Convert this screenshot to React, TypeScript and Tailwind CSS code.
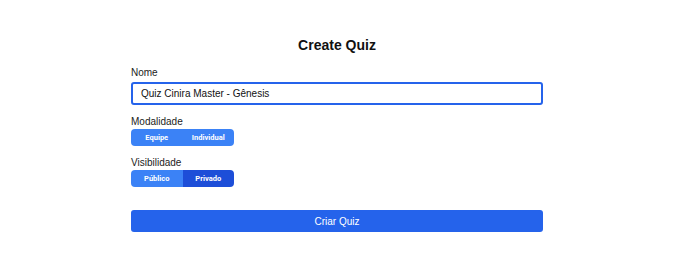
import React from "react";

const SANS = '"Liberation Sans", Arial, sans-serif';

export default function App() {
  return (
    <div className="min-h-screen bg-white flex justify-center pr-[3px]" style={{ fontFamily: SANS }}>
      <div className="w-[412px] pt-[37px] flex flex-col">
        <h1 className="text-center text-[14px] font-bold text-[#111] leading-[16px]">Create Quiz</h1>
        <div className="mt-[14px] flex flex-col">
          <label className="text-[10px] leading-[12px] text-[#222]">Nome</label>
          <input
            className="mt-[3px] h-[23px] w-full rounded-[3px] border-2 border-[#2563eb] px-[8px] text-[10px] text-[#111] outline-none"
            defaultValue="Quiz Cinira Master - Gênesis"
            style={{ fontFamily: SANS }}
          />
        </div>
        <div className="mt-[11px] flex flex-col">
          <label className="text-[10px] leading-[12px] text-[#222]">Modalidade</label>
          <div className="mt-[1px] flex w-[103px] h-[17px] rounded-[4px] overflow-hidden" style={{ fontFamily: 'Roboto, sans-serif' }}>
            <button className="flex-1 bg-[#3b82f6] text-white text-[7.5px] font-bold">Equipe</button>
            <button className="flex-1 bg-[#3b82f6] text-white text-[7.5px] font-bold">Individual</button>
          </div>
        </div>
        <div className="mt-[11px] flex flex-col">
          <label className="text-[10px] leading-[12px] text-[#222]">Visibilidade</label>
          <div className="mt-[1px] flex w-[103px] h-[17px] rounded-[4px] overflow-hidden" style={{ fontFamily: 'Roboto, sans-serif' }}>
            <button className="flex-1 bg-[#3b82f6] text-white text-[7.5px] font-bold">Público</button>
            <button className="flex-1 bg-[#1d4ed8] text-white text-[7.5px] font-bold">Privado</button>
          </div>
        </div>
        <button className="mt-[23px] h-[22px] w-full rounded-[3px] bg-[#2563eb] text-white text-[10px]">Criar Quiz</button>
      </div>
    </div>
  );
}
